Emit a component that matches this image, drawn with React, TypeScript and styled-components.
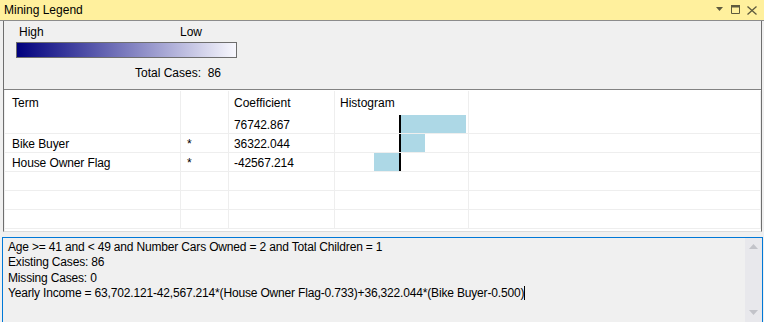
import React from 'react';
import styled, { createGlobalStyle } from 'styled-components';

const Global = createGlobalStyle`
  *, *::before, *::after { box-sizing: border-box; }
  html, body { margin: 0; padding: 0; background: #F0F0F0; }
  body {
    width: 764px; height: 322px; overflow: hidden;
    font-family: "Liberation Sans", Arial, sans-serif;
    font-size: 12px; color: #000;
  }
`;

const Window = styled.div`
  width: 764px; height: 322px; overflow: hidden;
  display: flex; flex-direction: column;
  background: #F0F0F0;
`;

const TitleBar = styled.div`
  flex: none; height: 21px;
  background: #FFF09D;
  border-bottom: 1px solid #8C8C8C;
  display: flex; align-items: center;
  padding: 0 7px 0 7px;
  line-height: 14px;
`;

const TitleText = styled.span`
  margin-left: -3px;
  color: #000;
`;

const TitleIcons = styled.div`
  margin-left: auto;
  display: flex; align-items: center;
  height: 20px;
`;

const Icon = styled.svg<{ $ml: number; $mt: number }>`
  display: block;
  margin-left: ${p => p.$ml}px;
  margin-top: ${p => p.$mt}px;
`;

const Frame = styled.div`
  flex: none;
  height: 211px;
  margin: 0 2px 0 3px;
  border-left: 1px solid #6E6E6E;
  border-right: 1px solid #6E6E6E;
  border-bottom: 1px solid #DCDCDC;
  display: flex; flex-direction: column;
`;

const Legend = styled.div`
  flex: none; height: 68px;
  padding: 4px 0 0 12px;
  display: flex; flex-direction: column;
`;

const LegendLabels = styled.div`
  width: 220px; height: 14px; line-height: 14px;
  display: flex;
  padding: 0 34px 0 3px;
  justify-content: space-between;
`;

const GradientBar = styled.div`
  margin-top: 3px;
  width: 221px; height: 16px;
  border: 1px solid #6E6E6E;
  background: linear-gradient(to right, #00007E, #F8F8FE);
`;

const TotalCases = styled.div`
  margin: 8px 0 0 119px;
  line-height: 14px;
  white-space: pre;
`;

const GridArea = styled.div`
  flex: 1;
  border-top: 1px solid #828282;
  padding-left: 1px;
  display: flex;
`;

const Grid = styled.div`
  flex: 1;
  background: #FFFFFF;
  display: grid;
  grid-template-columns: 176px 48px 106px 134px 1fr;
  grid-auto-rows: 19px;
  grid-template-rows: 25px;
  align-content: start;
`;

const HeaderCell = styled.div<{ $pl: number }>`
  border-right: 1px solid #EEEEEE;
  padding-left: ${p => p.$pl}px;
  display: flex; align-items: center;
  margin-top: 1px;
  white-space: nowrap;
`;

const Cell = styled.div<{ $pl: number }>`
  border-right: 1px solid #EEEEEE;
  border-bottom: 1px solid #EEEEEE;
  padding-left: ${p => p.$pl}px;
  padding-top: 1px;
  display: flex; align-items: center;
  white-space: nowrap;
  letter-spacing: -0.1px;
`;

const HistCell = styled.div`
  border-right: 1px solid #EEEEEE;
  border-bottom: 1px solid #EEEEEE;
  display: flex;
`;

const TextPanel = styled.div`
  flex: none;
  margin: 5px 1px 0 2px;
  height: 95px;
  border: 1px solid #0078D7;
  background: #F0F0F0;
  display: flex;
`;

const TextBody = styled.div`
  flex: 1;
  padding: 2px 0 0 5px;
  line-height: 15.4px;
  letter-spacing: -0.17px;
  white-space: pre;
`;

const Caret = styled.span`
  display: inline-block;
  width: 1px; height: 14px;
  background: #000;
  vertical-align: -3px;
`;

const ScrollBar = styled.div`
  flex: none;
  width: 17px;
  background: #E8E8EC;
  display: flex; flex-direction: column; align-items: center;
  padding-top: 6px;
`;

const ScrollSpacer = styled.div`
  flex: none; height: 61px;
`;

type Row = { term: string; star: string; coef: string; bar?: { x: number; w: number } };

const rows: Row[] = [
  { term: '', star: '', coef: '76742.867', bar: { x: 66, w: 65 } },
  { term: 'Bike Buyer', star: '*', coef: '36322.044', bar: { x: 66, w: 24 } },
  { term: 'House Owner Flag', star: '*', coef: '-42567.214', bar: { x: 39, w: 25 } },
  { term: '', star: '', coef: '' },
  { term: '', star: '', coef: '' },
  { term: '', star: '', coef: '' },
];

const Histogram: React.FC<{ bar?: { x: number; w: number } }> = ({ bar }) => (
  <HistCell>
    {bar && (
      <svg width="133" height="18" style={{ display: 'block' }}>
        <rect x={bar.x} y={0} width={bar.w} height={18} fill="#ADD8E6" />
        <rect x={64} y={0} width={2} height={18} fill="#000" />
      </svg>
    )}
  </HistCell>
);

export default function App() {
  return (
    <Window>
      <Global />
      <TitleBar>
        <TitleText>Mining Legend</TitleText>
        <TitleIcons>
          <Icon $ml={0} $mt={-2} width="7" height="4" viewBox="0 0 7 4">
            <polygon points="0,0 7,0 3.5,4" fill="#5E5A3E" />
          </Icon>
          <Icon $ml={8} $mt={-1} width="9" height="9" viewBox="0 0 9 9">
            <path d="M0.5 0.5H8.5V8.5H0.5Z" fill="none" stroke="#5E5A3E" strokeWidth="1" />
            <rect x="0" y="0" width="9" height="2.5" fill="#5E5A3E" />
          </Icon>
          <Icon $ml={7} $mt={0} width="10" height="9" viewBox="0 0 10 9">
            <path d="M0.5 0.5L9.5 8.5M9.5 0.5L0.5 8.5" stroke="#5E5A3E" strokeWidth="1.3" />
          </Icon>
        </TitleIcons>
      </TitleBar>
      <Frame>
        <Legend>
          <LegendLabels>
            <span>High</span>
            <span>Low</span>
          </LegendLabels>
          <GradientBar />
          <TotalCases>{'Total Cases:  86'}</TotalCases>
        </Legend>
        <GridArea>
          <Grid>
            <HeaderCell $pl={7}>Term</HeaderCell>
            <HeaderCell $pl={6}></HeaderCell>
            <HeaderCell $pl={5}>Coefficient</HeaderCell>
            <HeaderCell $pl={5}>Histogram</HeaderCell>
            <HeaderCell $pl={5}></HeaderCell>
            {rows.map((r, i) => (
              <React.Fragment key={i}>
                <Cell $pl={7}>{r.term}</Cell>
                <Cell $pl={6}>{r.star}</Cell>
                <Cell $pl={5}>{r.coef}</Cell>
                <Histogram bar={r.bar} />
                <Cell $pl={5}></Cell>
              </React.Fragment>
            ))}
          </Grid>
        </GridArea>
      </Frame>
      <TextPanel>
        <TextBody>
          {'Age >= 41 and < 49 and Number Cars Owned = 2 and Total Children = 1\n'}
          {'Existing Cases: 86\n'}
          {'Missing Cases: 0\n'}
          {'Yearly Income = 63,702.121-42,567.214*(House Owner Flag-0.733)+36,322.044*(Bike Buyer-0.500)'}
          <Caret />
        </TextBody>
        <ScrollBar>
          <svg width="9" height="5" viewBox="0 0 9 5" style={{ display: 'block' }}>
            <polygon points="0,5 9,5 4.5,0" fill="#C2C3C9" />
          </svg>
          <ScrollSpacer />
          <svg width="9" height="5" viewBox="0 0 9 5" style={{ display: 'block' }}>
            <polygon points="0,0 9,0 4.5,5" fill="#C2C3C9" />
          </svg>
        </ScrollBar>
      </TextPanel>
    </Window>
  );
}
